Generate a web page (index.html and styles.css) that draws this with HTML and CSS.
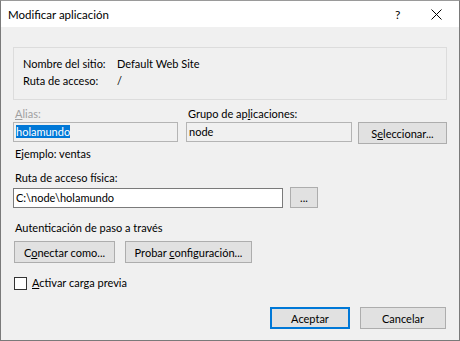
FILE: index.html
```html
<!DOCTYPE html>
<html lang="es">
<head>
    <meta charset="UTF-8">
    <meta name="viewport" content="width=device-width, initial-scale=1.0">
    <title>Modificar aplicación</title>
    <link rel="stylesheet" href="styles.css">
</head>
<body>
    <div class="window">
        <!-- Barra de título -->
        <div class="titlebar">
            <span class="title">Modificar aplicación</span>
            <span class="help">?</span>
            <span class="close">
                <svg width="11" height="11" viewBox="0 0 11 11"><path d="M0.5 0.5L10.5 10.5M10.5 0.5L0.5 10.5" stroke="#000" stroke-width="1"/></svg>
            </span>
        </div>

        <div class="content">
            <!-- Datos del sitio -->
            <div class="info">
                <div class="info-row"><span class="info-label">Nombre del sitio:</span><span>Default Web Site</span></div>
                <div class="info-row"><span class="info-label">Ruta de acceso:</span><span>/</span></div>
            </div>

            <div class="app-grid">
                <span class="field-label disabled"><u>A</u>lias:</span>
                <span class="field-label group-label">Grupo de ap<u>l</u>icaciones:</span>
                <div class="textbox readonly"><span class="selected">holamundo</span></div>
                <div class="textbox readonly">node</div>
                <button class="btn">S<u>e</u>leccionar...</button>
            </div>

            <div class="hint">Ejemplo: ventas</div>

            <div class="field-label path-label">Ruta de acceso f<u>í</u>sica:</div>
            <div class="path-row">
                <div class="textbox path-box">C:\node\holamundo</div>
                <button class="btn browse">...</button>
            </div>

            <div class="section-label">Autenticación de paso a través</div>
            <div class="auth-row">
                <button class="btn connect">C<u>o</u>nectar como...</button>
                <button class="btn test">Probar <u>c</u>onfiguración...</button>
            </div>

            <label class="check"><span class="checkbox"></span><span><u>A</u>ctivar carga previa</span></label>

            <div class="footer">
                <button class="btn primary">Aceptar</button>
                <button class="btn cancel">Cancelar</button>
            </div>
        </div>
    </div>
</body>
</html>
```

FILE: styles.css
```css
body {
    margin: 0;
    font-family: 'Lato', 'Noto Sans', sans-serif;
    font-size: 11px;
    color: #000;
    background-color: #f0f0f0;
}

u {
    text-decoration: underline;
    text-underline-offset: 1px;
}

.window {
    width: 460px;
    height: 341px;
    box-sizing: border-box;
    border: 1px solid #7a7a7a;
    border-top-color: #9a9a9a;
    background-color: #f0f0f0;
    display: flex;
    flex-direction: column;
}

.titlebar {
    height: 26px;
    background-color: #fff;
    display: flex;
    align-items: center;
    padding-left: 7px;
}

.title {
    flex: 1;
    font-size: 11.5px;
}

.help {
    width: 12px;
    margin-right: 24px;
    font-size: 12px;
}

.close {
    display: flex;
    margin-right: 17px;
}

.content {
    padding: 20px 12px 0 12px;
    display: flex;
    flex-direction: column;
    align-items: flex-start;
}

.info {
    align-self: stretch;
    border: 1px solid #dcdcdc;
    padding: 7px 9px 10px 9px;
}

.info-row {
    display: flex;
    line-height: 17px;
}

.info-label {
    width: 94px;
}

.app-grid {
    margin-top: 6px;
    display: grid;
    grid-template-columns: 165px 166px 87px;
    column-gap: 8px;
    align-self: stretch;
}

.group-label {
    grid-column: 2 / 4;
}

.app-grid .btn {
    margin-left: -2px;
}

.field-label {
    line-height: 16px;
    padding-left: 2px;
}

.disabled {
    color: #a0a0a0;
}

.textbox {
    box-sizing: border-box;
    height: 20px;
    line-height: 18px;
    border: 1px solid #7a7a7a;
    background-color: #fff;
    padding-left: 2px;
    white-space: nowrap;
}

.readonly {
    background-color: #f0f0f0;
    border-color: #b4b4b4;
}

.selected {
    background-color: #0078d7;
    color: #fff;
}

.btn {
    box-sizing: border-box;
    height: 22px;
    font-family: inherit;
    font-size: 11px;
    color: #000;
    background-color: #e1e1e1;
    border: 1px solid #adadad;
    padding: 0;
}

.hint {
    margin-top: 2px;
    line-height: 16px;
    padding-left: 2px;
}

.path-label {
    margin-top: 8px;
}

.path-row {
    margin-top: 1px;
    display: flex;
    align-items: flex-start;
    gap: 7px;
}

.path-box {
    width: 270px;
    margin-top: 1px;
}

.browse {
    width: 28px;
    height: 21px;
}

.section-label {
    margin-top: 12px;
    line-height: 16px;
    padding-left: 2px;
}

.auth-row {
    margin-top: 5px;
    display: flex;
    gap: 10px;
}

.connect {
    width: 101px;
    margin-left: 1px;
}

.test {
    width: 127px;
}

.check {
    margin-top: 12px;
    display: flex;
    align-items: center;
    gap: 5px;
    line-height: 16px;
}

.checkbox {
    width: 13px;
    height: 13px;
    box-sizing: border-box;
    border: 1px solid #333;
    background-color: #fff;
    margin-left: 1px;
}

.footer {
    align-self: stretch;
    margin-top: 16px;
    display: flex;
    justify-content: flex-end;
    gap: 10px;
    padding-right: 1px;
}

.primary {
    width: 80px;
    border-color: #0078d7;
    box-shadow: inset 0 0 0 1px #0078d7;
}

.cancel {
    width: 86px;
}
```
